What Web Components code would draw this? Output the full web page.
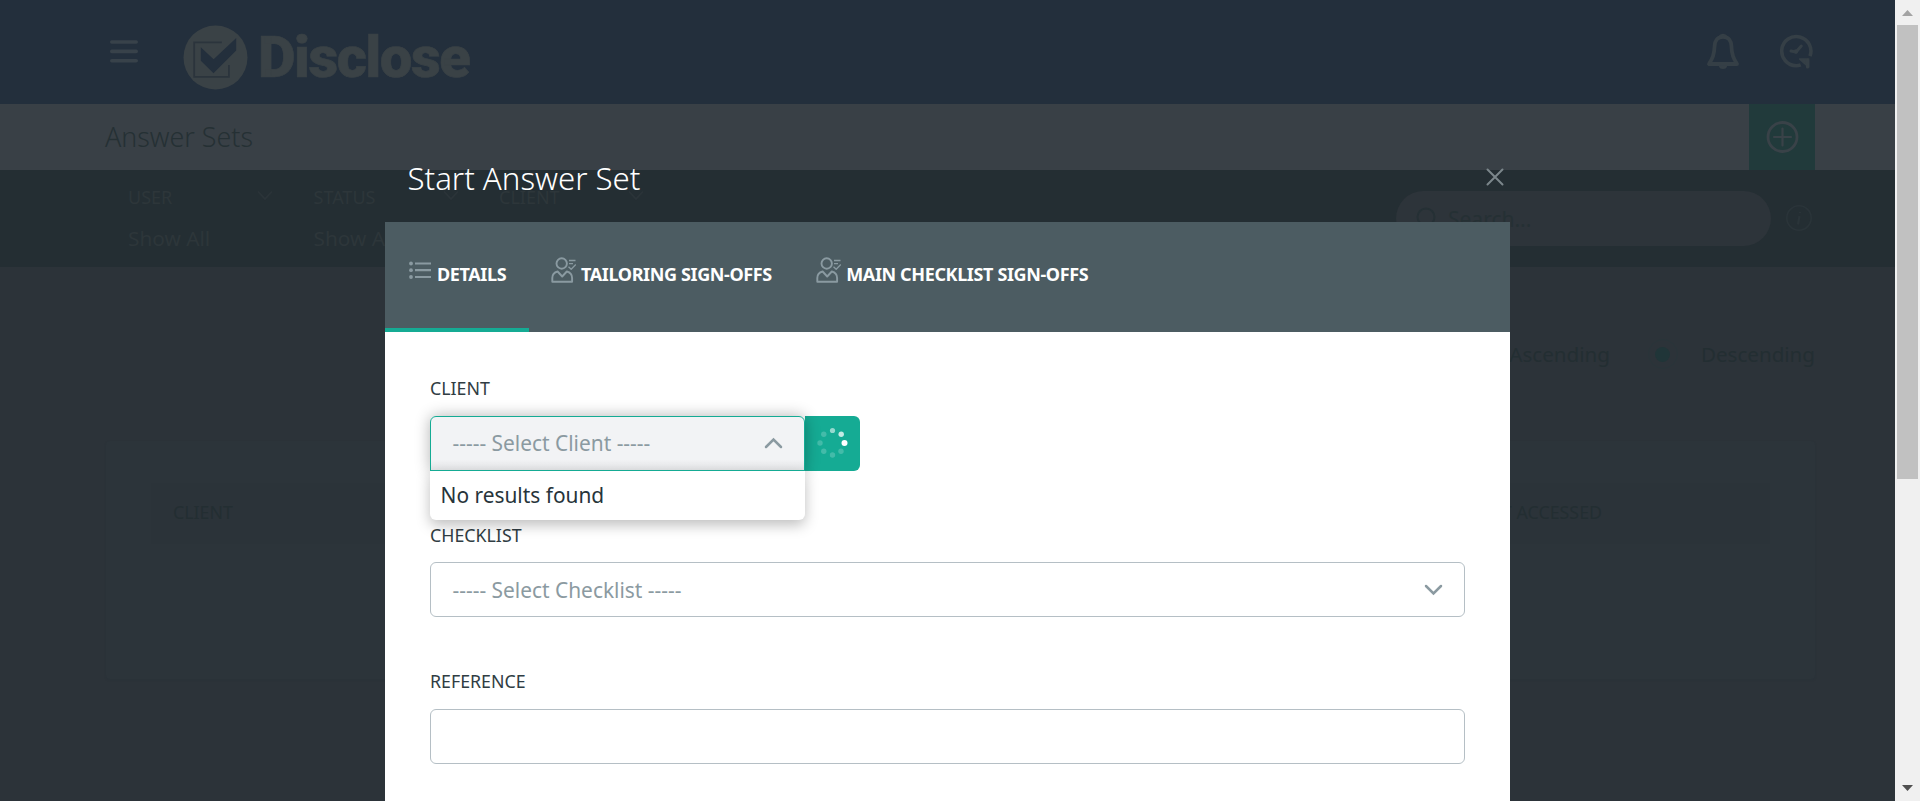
<!DOCTYPE html>
<html lang="en">
<head>
<meta charset="utf-8">
<title>Start Answer Set</title>
<style>
html,body{margin:0;height:100%;overflow:hidden;background:#2d333a;font-family:"Noto Sans","Open Sans",sans-serif}
</style>
</head>
<body>
<disclose-app></disclose-app>
<script>
function define(name, css, html) {
  const tpl = document.createElement('template');
  tpl.innerHTML = `<style>*{box-sizing:border-box}${css}</style>${html}`;
  customElements.define(name, class extends HTMLElement {
    constructor() {
      super();
      this.attachShadow({mode: 'open'}).append(tpl.content.cloneNode(true));
    }
  });
}

define('app-header', `
:host{display:flex;align-items:flex-start;height:104px;background:#232f3c;padding:0 82px 0 110px;box-sizing:border-box}
.menu{margin-top:40px;width:28px;height:23px}
.logo{margin:25px 0 0 45px;width:65px;height:65px}
.name{margin-left:10px;margin-top:23px;font:900 58px/68px Roboto,sans-serif;letter-spacing:-1.5px;color:#3a4246;-webkit-text-stroke:.6px #3a4246}
.gap{flex:1}
.bell{margin-top:32px;width:34px;height:39px}
.clock{margin:34px 0 0 39px;width:34px;height:35px}
`, `
<svg class="menu" viewBox="0 0 28 23"><path d="M1.8 2h24.4M1.8 11.4h24.4M1.8 20.7h24.4" stroke="#38424a" stroke-width="3.6" stroke-linecap="round"/></svg>
<svg class="logo" viewBox="183.5 25 65 65"><circle cx="216" cy="57.5" r="32" fill="#3a4246"/><path d="M222.3 42.4h-27.6v34.4h34.7V65" fill="none" stroke="#2b343c" stroke-width="1.8"/><path d="M201.3 47.3l12.8 12L236.7 38v12.5L214 73.3l-12.7-12.6z" fill="#232f3c"/></svg>
<span class="name">Disclose</span>
<span class="gap"></span>
<svg class="bell" viewBox="1706 32 34 39"><path d="M1719.2 37a4.4 4.4 0 0 1 7.6 0z" fill="#353f46" stroke="#353f46" stroke-width="2"/><path d="M1723 36.8c-5.500 0-8.200 4-8.400 9.200-.3 9-2.300 12.500-5.600 18h28c-3.300-5.500-5.300-9-5.600-18-.2-5.200-2.900-9.200-8.400-9.200z" fill="none" stroke="#353f46" stroke-width="3.800" stroke-linejoin="round"/><path d="M1718.600 65.500a4.500 4.500 0 0 0 8.800 0z" fill="#353f46"/></svg>
<svg class="clock" viewBox="1779.500 34 34 35"><path d="M1810.500 56.200a14.600 14.600 0 1 0-13.800 9.500q2.300 0 4.500-.9" fill="none" stroke="#353f46" stroke-width="3.600"/><path d="M1800 59h9.200v8.200z" fill="#353f46" stroke="#353f46" stroke-width="1.500" stroke-linejoin="round"/><path d="M1808 60v7" stroke="#353f46" stroke-width="3.200" stroke-linecap="round"/><path d="M1791.500 51l5 1 5.300-6" fill="none" stroke="#353f46" stroke-width="3" stroke-linecap="round" stroke-linejoin="round"/><circle cx="1796.500" cy="51.500" r="2.200" fill="#353f46"/></svg>
`);

define('page-bar', `
:host{display:flex;align-items:center;justify-content:space-between;height:66px;background:#394046;padding:0 80px 0 105px;box-sizing:border-box}
h1{margin:0 0 1px;font-size:26.800px;font-weight:300;line-height:40px;color:#253034}
.add{display:flex;align-items:center;justify-content:center;width:66px;height:66px;background:#213a3b}
`, `
<h1>Answer Sets</h1>
<span class="add"><svg width="34" height="34" viewBox="-17.500 -17 34 34" fill="none" stroke="#394248"><circle r="14.500" stroke-width="2.800"/><path d="M-8.500 0h17M0-8.500v17" stroke-width="2.200" stroke-linecap="round"/></svg></span>
`);

define('filter-item', `
:host{display:block;width:185.500px}
.top{display:flex;justify-content:space-between;padding-right:40.500px;height:24px;line-height:24px;font-size:18px}
svg{margin-top:5px}
.v{display:block;font-size:20.800px;line-height:30px;margin-top:14px}
`, `
<div class="top"><slot></slot><svg width="16" height="11" viewBox="0 0 16 11" fill="none" stroke="#2b3439" stroke-width="1.800"><path d="M1 1.500l7 7.500 7-7.500"/></svg></div>
<span class="v">Show All</span>
`);

define('filter-bar', `
:host{display:flex;height:97px;background:#242e33;padding:15px 80px 0 128px;box-sizing:border-box;color:#2d363a}
.filters{display:flex;flex:1}
.search{display:flex;align-items:center;width:375px;height:55px;margin-top:6px;border-radius:28px;background:#2d343a;padding:0 20px;font-size:21px;color:#253034}
.search svg{margin-right:10px}
.info{margin:19px 2px 0 14px}
`, `
<div class="filters"><filter-item>USER</filter-item><filter-item>STATUS</filter-item><filter-item>CLIENT</filter-item></div>
<div class="search"><svg width="22" height="24" viewBox="0 0 22 24" fill="none" stroke="#253035" stroke-width="2"><circle cx="10" cy="10" r="8.500"/><path d="M15 16.500l5 6"/></svg>Search...</div>
<svg class="info" width="28" height="28" viewBox="-14 -14 28 28" fill="none" stroke="#2a3439"><circle r="12.200" stroke-width="1.600"/><path d="M.5-2l-1.500 8.500M.9-6v1" stroke-width="2.200"/></svg>
`);

define('answer-list', `
:host{display:block;padding:0 80px 0 106px;color:#232e32}
.sort{display:flex;justify-content:flex-end;align-items:center;height:30px;margin-top:72px;font-size:20.600px}
.sort i{width:30px;height:30px;border-radius:50%;border:1px solid #29353a;margin:0 23px 0 38px;display:flex;align-items:center;justify-content:center}
.sort i::after{content:"";width:15px;height:15px;border-radius:50%;background:#203538}
.card{margin-top:72px;height:238px;padding:42px 45px 0;border-radius:4px;background:#2c343a;box-shadow:0 1px 2px #29313760}
.head{display:flex;justify-content:space-between;align-items:center;height:61px;background:#2b3339;padding:0 168px 3px 22px;font-size:17.800px}
`, `
<div class="sort"><span>Ascending</span><i></i><span>Descending</span></div>
<div class="card"><div class="head"><span>CLIENT</span><span>LAST ACCESSED</span></div></div>
`);

define('dialog-tab', `
:host{display:flex;align-items:center;height:110px;font-size:18px;letter-spacing:-.37px;font-weight:700;color:#fff;padding:0 22.300px 2px 22px;box-sizing:border-box;white-space:nowrap;border-bottom:4px solid transparent}
:host([active]){border-bottom-color:#15ab94;width:144px}
::slotted(svg){margin:-8px 5px 0 0;flex:none}
`, `<slot name="icon"></slot><slot></slot>`);

define('form-field', `
:host{display:block;height:146.500px}
label{display:block;font-size:17.800px;line-height:23px;color:#303d43;height:38.500px}
`, `<label><slot name="label"></slot></label><slot></slot>`);

define('select-box', `
:host{display:flex;align-items:center;justify-content:space-between;height:55px;border:1px solid #b5bfc5;border-radius:6px;padding:0 21.500px;box-sizing:border-box;font-size:20.900px;color:#8b9aa1;background:#fff}
:host([open]){position:relative;width:375px;border-color:#15ab94;border-radius:6px 6px 0 0;background:linear-gradient(#f2f3f5 80%,#e4e5e7);box-shadow:0 0 15px rgba(0,0,0,.3)}
.menu{display:none}
:host([open]) .menu{display:flex;align-items:center;position:absolute;left:-1px;top:54px;width:375px;height:49px;padding:0 0 0 10.500px;background:#fff;border-radius:0 0 6px 6px;color:#27343a;box-shadow:0 5px 14px rgba(0,0,0,.26)}
.menu::before{content:"";position:absolute;left:0;top:-1px;width:100%;height:1px;background:#15ab94}
svg{width:19px;height:12px}
:host([open]) svg{transform:rotate(180deg)}
`, `
<slot></slot>
<svg viewBox="0 0 19 12" fill="none" stroke="#8b9aa1" stroke-width="2.500" stroke-linecap="round"><path d="M2 2l7.500 7.500L17 2"/></svg>
<div class="menu">No results found</div>
`);

define('text-box', `:host{display:block;height:55px;border:1px solid #b5bfc5;border-radius:6px;box-sizing:border-box;background:#fff}`, ``);

define('busy-button', `
:host{display:flex;align-items:center;justify-content:center;width:55px;height:55px;background:#15ab94;border-radius:0 6px 6px 0}
`, `
<svg width="34" height="34" viewBox="-16.500 -17 34 34" fill="#fff"><circle cy="-12.500" r="2.600" fill-opacity=".55"/><circle cx="8.700" cy="-8.700" r="2.700" fill-opacity=".75"/><circle cx="12" r="3"/><g fill-opacity=".2"><circle cx="8.500" cy="8.300" r="2.700"/><circle cy="12" r="2.700"/><circle cx="-8.700" cy="8.300" r="2.700"/><circle cx="-12.500" r="2.700"/><circle cx="-8.700" cy="-8.700" r="2.700"/></g></svg>
`);

const signIcon = '<svg slot="icon" width="25" height="27" viewBox="0 0 25 27" fill="none" stroke="#8a9aa1" stroke-width="1.900" stroke-linejoin="round"><circle cx="10.700" cy="6.500" r="5.200"/><path d="M6.600 14.500C3 15.500 1.300 18 1.300 21v3.800h19.800V21c0-3-1.700-5.500-5.300-6.500l-4.600 5z"/><path d="M18 3.500h6.500M18 6.700h4M17.500 9.700l2.700 2.600 4.600-4.800" stroke-width="1.300"/></svg>';

define('start-dialog', `
:host{display:block;width:1125px}
header{display:flex;align-items:center;justify-content:space-between;height:58px;padding:0 6px 0 22.500px}
h2{margin:-31px 0 0;font-size:31.200px;font-weight:300;line-height:44px;color:#fff}
.close{margin:-33px 0 0}
nav{display:flex;height:110px;background:#4c5c62}
form{background:#fff;height:470px;padding:45px 45px 0}
.row{display:flex}
`, `
<header><h2>Start Answer Set</h2><svg class="close" width="18" height="18" viewBox="0 0 18 18" stroke="#7b868b" stroke-width="2" stroke-linecap="round"><path d="M1.500 1.500l15 15M16.500 1.500l-15 15"/></svg></header>
<nav>
<dialog-tab active><svg slot="icon" width="25" height="18" viewBox="0 0 25 18" fill="#8a9aa1"><circle cx="4" cy="2.500" r="1.900"/><circle cx="4" cy="9.200" r="1.900"/><circle cx="4" cy="16" r="1.900"/><path d="M8 1.400h16v2.200H8zM8 8.100h16v2.200H8zM8 14.900h16v2.200H8z"/></svg>DETAILS</dialog-tab>
<dialog-tab>${signIcon}TAILORING SIGN-OFFS</dialog-tab>
<dialog-tab>${signIcon}MAIN CHECKLIST SIGN-OFFS</dialog-tab>
</nav>
<form>
<form-field><span slot="label">CLIENT</span><div class="row"><select-box open>----- Select Client -----</select-box><busy-button></busy-button></div></form-field>
<form-field><span slot="label">CHECKLIST</span><select-box>----- Select Checklist -----</select-box></form-field>
<form-field><span slot="label">REFERENCE</span><text-box></text-box></form-field>
</form>
`);

define('scroll-track', `
:host{display:flex;flex-direction:column;align-items:center;width:25px;height:801px;background:#f0f0f0}
svg{flex:none}
.thumb{width:21px;height:454px;background:#c1c1c1}
.gap{flex:1}
`, `
<svg width="25" height="25" viewBox="0 0 25 25"><path d="M7 16l5.500-6 5.500 6z" fill="#a3a3a3"/></svg>
<div class="thumb"></div><div class="gap"></div>
<svg width="25" height="25" viewBox="0 0 25 25"><path d="M7 9h11l-5.500 6z" fill="#505050"/></svg>
`);

define('disclose-app', `
:host{display:flex;height:801px;overflow:hidden;position:relative}
.page{flex:1;min-width:0;background:#2c3339}
start-dialog{position:absolute;left:385px;top:164px}
`, `
<div class="page"><app-header></app-header><page-bar></page-bar><filter-bar></filter-bar><answer-list></answer-list></div>
<scroll-track></scroll-track>
<start-dialog></start-dialog>
`);
</script>
</body>
</html>
